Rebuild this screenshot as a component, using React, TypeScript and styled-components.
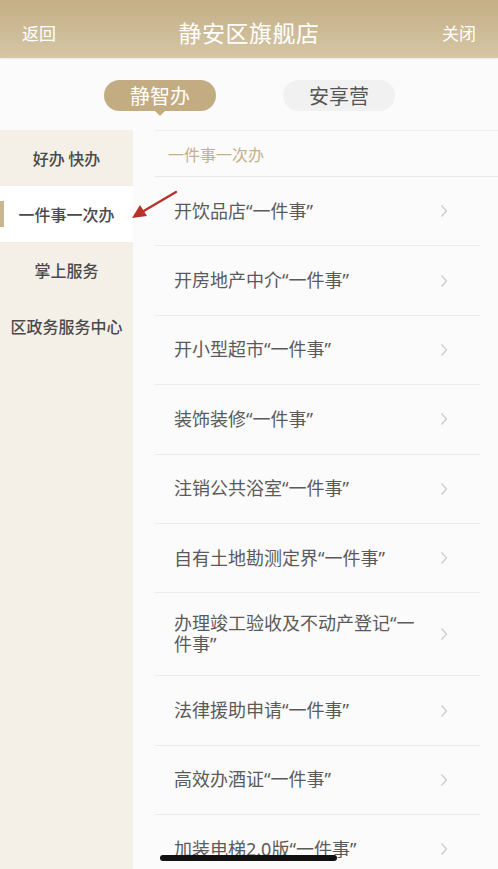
import React from "react";
import styled, { createGlobalStyle } from "styled-components";

const GlobalStyle = createGlobalStyle`
  html, body {
    margin: 0;
    padding: 0;
    height: 100%;
    overflow: hidden;
    background: #fbfbfb;
    font-family: "Noto Sans", "Noto Sans CJK SC", sans-serif;
  }
`;

const sideItems = ["好办 快办", "一件事一次办", "掌上服务", "区政务服务中心"];

const items = [
  "开饮品店“一件事”",
  "开房地产中介“一件事”",
  "开小型超市“一件事”",
  "装饰装修“一件事”",
  "注销公共浴室“一件事”",
  "自有土地勘测定界“一件事”",
  "办理竣工验收及不动产登记“一件事”",
  "法律援助申请“一件事”",
  "高效办酒证“一件事”",
  "加装电梯2.0版“一件事”",
];

const Chevron = () => (
  <svg width="8" height="14" viewBox="0 0 8 14" fill="none">
    <path d="M1.5 1.5 L6.5 7 L1.5 12.5" stroke="#cacaca" strokeWidth="1.2" />
  </svg>
);

const App = () => {
  return (
    <Page>
      <GlobalStyle />
      <Header>
        <HeaderLink>返回</HeaderLink>
        <Title>静安区旗舰店</Title>
        <HeaderLink>关闭</HeaderLink>
      </Header>

      <Tabs>
        <Tab active>静智办</Tab>
        <Tab>安享营</Tab>
      </Tabs>

      <Body>
        <Sidebar>
          {sideItems.map((s, i) => (
            <SideItem key={s} active={i === 1}>
              {s}
            </SideItem>
          ))}
        </Sidebar>

        <Main>
          <SectionHead>一件事一次办</SectionHead>
          {items.map((t) => (
            <Row key={t}>
              <RowText>{t}</RowText>
              <Chevron />
            </Row>
          ))}
        </Main>
      </Body>

      <Arrow width="60" height="40" viewBox="0 0 60 40">
        <path d="M44 2 L10 22" stroke="#b7322b" strokeWidth="2.4" strokeLinecap="round" />
        <path d="M0 28 L8 15 L15 26 Z" fill="#b7322b" />
      </Arrow>
      <HomeBar />
    </Page>
  );
};

export default App;

const Page = styled.div`
  position: relative;
  width: 498px;
  height: 869px;
  overflow: hidden;
  display: flex;
  flex-direction: column;
  background: #fbfbfb;
`;

const Header = styled.div`
  height: 58px;
  flex-shrink: 0;
  display: flex;
  align-items: center;
  justify-content: space-between;
  padding: 6px 22px 0 22px;
  box-sizing: border-box;
  background: linear-gradient(180deg, #c4ae85 0%, #d5c6a5 100%);
  box-shadow: 0 1px 2px rgba(0, 0, 0, 0.08);
`;

const HeaderLink = styled.span`
  color: #fff;
  font-size: 17px;
  font-family: "Noto Sans CJK SC", sans-serif;
`;

const Title = styled.span`
  color: #fff;
  font-size: 23px;
  font-family: "Noto Sans CJK SC", sans-serif;
  letter-spacing: 0.5px;
`;

const Tabs = styled.div`
  height: 72px;
  flex-shrink: 0;
  display: flex;
  justify-content: center;
  align-items: flex-start;
  gap: 67px;
  padding-top: 22px;
  box-sizing: border-box;
  padding-left: 1px;
`;

const Tab = styled.div<{ active?: boolean }>`
  position: relative;
  width: 112px;
  height: 31px;
  border-radius: 16px;
  display: flex;
  align-items: center;
  justify-content: center;
  font-size: 20px;
  font-family: "Noto Sans CJK SC", sans-serif;
  background: ${(p) => (p.active ? "#c3ac81" : "#f1f1f1")};
  color: ${(p) => (p.active ? "#fff" : "#555")};

  &::after {
    content: "";
    display: ${(p) => (p.active ? "block" : "none")};
    position: absolute;
    left: 50%;
    bottom: -5px;
    margin-left: -5px;
    border-left: 5px solid transparent;
    border-right: 5px solid transparent;
    border-top: 5px solid #c3ac81;
  }
`;

const Body = styled.div`
  flex: 1;
  display: flex;
  min-height: 0;
`;

const Sidebar = styled.div`
  width: 133px;
  flex-shrink: 0;
  background: #f4f0e7;
  display: flex;
  flex-direction: column;
`;

const SideItem = styled.div<{ active?: boolean }>`
  position: relative;
  height: 56px;
  flex-shrink: 0;
  display: flex;
  align-items: center;
  justify-content: center;
  font-size: 16px;
  font-weight: 500;
  color: #4a4a4a;
  font-family: "Noto Sans CJK SC", sans-serif;
  background: ${(p) => (p.active ? "#fff" : "transparent")};

  &::before {
    content: "";
    display: ${(p) => (p.active ? "block" : "none")};
    position: absolute;
    left: 0;
    top: 15px;
    width: 4px;
    height: 26px;
    background: #c9b58e;
  }
`;

const Main = styled.div`
  flex: 1;
  padding-left: 22px;
  display: flex;
  flex-direction: column;
`;

const SectionHead = styled.div`
  height: 47px;
  flex-shrink: 0;
  box-sizing: border-box;
  border-top: 1px solid #eeeeee;
  border-bottom: 1px solid #e8e8e8;
  display: flex;
  align-items: center;
  padding-left: 13px;
  font-size: 16px;
  color: #c6b089;
  font-family: "Noto Sans CJK SC", sans-serif;
`;

const Row = styled.div`
  min-height: 69.4px;
  box-sizing: border-box;
  margin-right: 18px;
  padding: 20px 0 20px 19px;
  border-bottom: 1px solid #ececec;
  display: flex;
  align-items: center;
  flex-shrink: 0;

  svg {
    margin-left: 14px;
    flex-shrink: 0;
  }
`;

const RowText = styled.div`
  width: 252px;
  font-size: 18px;
  line-height: 21px;
  color: #5a5a5a;
`;

const Arrow = styled.svg`
  position: absolute;
  left: 132px;
  top: 190px;
`;

const HomeBar = styled.div`
  position: absolute;
  left: 160px;
  bottom: 8px;
  width: 177px;
  height: 6px;
  border-radius: 3px;
  background: #111;
`;
